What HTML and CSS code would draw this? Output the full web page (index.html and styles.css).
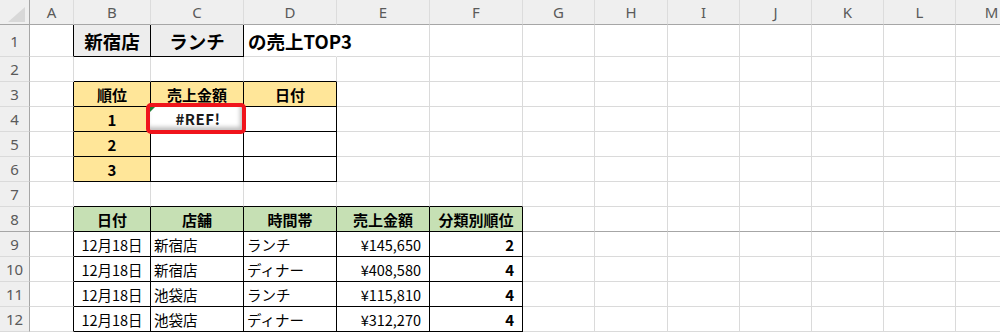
FILE: index.html
```html
<!DOCTYPE html>
<html lang="ja">
<head>
<meta charset="utf-8">
<link rel="stylesheet" href="styles.css">
</head>
<body>
<div class="sheet">
  <!-- header -->
  <div class="corner"></div>
  <div class="hd">A</div><div class="hd">B</div><div class="hd">C</div><div class="hd">D</div><div class="hd">E</div><div class="hd">F</div><div class="hd">G</div><div class="hd">H</div><div class="hd">I</div><div class="hd">J</div><div class="hd">K</div><div class="hd">L</div><div class="hd">M</div>

  <!-- row 1 -->
  <div class="rh">1</div>
  <div class="c br"></div>
  <div class="c gy br bb big ctr">新宿店</div>
  <div class="c gy br bb big ctr">ランチ</div>
  <div class="c big nr">の売上TOP3</div>
  <div class="c"></div><div class="c"></div><div class="c"></div><div class="c"></div><div class="c"></div><div class="c"></div><div class="c"></div><div class="c"></div><div class="c"></div>

  <!-- row 2 -->
  <div class="rh">2</div>
  <div class="c"></div>
  <div class="c bb"></div><div class="c bb"></div><div class="c bb"></div>
  <div class="c"></div><div class="c"></div><div class="c"></div><div class="c"></div><div class="c"></div><div class="c"></div><div class="c"></div><div class="c"></div><div class="c"></div>

  <!-- row 3 -->
  <div class="rh">3</div>
  <div class="c br"></div>
  <div class="c y b ctr br bb">順位</div>
  <div class="c y b ctr br bb">売上金額</div>
  <div class="c y b ctr br bb">日付</div>
  <div class="c"></div><div class="c"></div><div class="c"></div><div class="c"></div><div class="c"></div><div class="c"></div><div class="c"></div><div class="c"></div><div class="c"></div>

  <!-- row 4 -->
  <div class="rh">4</div>
  <div class="c br"></div>
  <div class="c y b ctr br bb">1</div>
  <div class="c br bb ctr err-cell"><span class="err">#REF!<span class="tri"></span></span></div>
  <div class="c br bb"></div>
  <div class="c"></div><div class="c"></div><div class="c"></div><div class="c"></div><div class="c"></div><div class="c"></div><div class="c"></div><div class="c"></div><div class="c"></div>

  <!-- row 5 -->
  <div class="rh">5</div>
  <div class="c br"></div>
  <div class="c y b ctr br bb">2</div>
  <div class="c br bb"></div>
  <div class="c br bb"></div>
  <div class="c"></div><div class="c"></div><div class="c"></div><div class="c"></div><div class="c"></div><div class="c"></div><div class="c"></div><div class="c"></div><div class="c"></div>

  <!-- row 6 -->
  <div class="rh">6</div>
  <div class="c br"></div>
  <div class="c y b ctr br bb">3</div>
  <div class="c br bb"></div>
  <div class="c br bb"></div>
  <div class="c"></div><div class="c"></div><div class="c"></div><div class="c"></div><div class="c"></div><div class="c"></div><div class="c"></div><div class="c"></div><div class="c"></div>

  <!-- row 7 -->
  <div class="rh">7</div>
  <div class="c"></div>
  <div class="c bb"></div><div class="c bb"></div><div class="c bb"></div><div class="c bb"></div><div class="c bb"></div>
  <div class="c"></div><div class="c"></div><div class="c"></div><div class="c"></div><div class="c"></div><div class="c"></div><div class="c"></div>

  <!-- row 8 -->
  <div class="rh fz">8</div>
  <div class="c fz br"></div>
  <div class="c g b ctr br bb">日付</div>
  <div class="c g b ctr br bb">店舗</div>
  <div class="c g b ctr br bb">時間帯</div>
  <div class="c g b ctr br bb">売上金額</div>
  <div class="c g b ctr br bb">分類別順位</div>
  <div class="c fz"></div><div class="c fz"></div><div class="c fz"></div><div class="c fz"></div><div class="c fz"></div><div class="c fz"></div><div class="c fz"></div>

  <!-- row 9 -->
  <div class="rh">9</div>
  <div class="c br"></div>
  <div class="c ctr br bb">12月18日</div>
  <div class="c br bb">新宿店</div>
  <div class="c br bb">ランチ</div>
  <div class="c rt br bb">¥145,650</div>
  <div class="c rt b br bb">2</div>
  <div class="c"></div><div class="c"></div><div class="c"></div><div class="c"></div><div class="c"></div><div class="c"></div><div class="c"></div>

  <!-- row 10 -->
  <div class="rh">10</div>
  <div class="c br"></div>
  <div class="c ctr br bb">12月18日</div>
  <div class="c br bb">新宿店</div>
  <div class="c br bb">ディナー</div>
  <div class="c rt br bb">¥408,580</div>
  <div class="c rt b br bb">4</div>
  <div class="c"></div><div class="c"></div><div class="c"></div><div class="c"></div><div class="c"></div><div class="c"></div><div class="c"></div>

  <!-- row 11 -->
  <div class="rh">11</div>
  <div class="c br"></div>
  <div class="c ctr br bb">12月18日</div>
  <div class="c br bb">池袋店</div>
  <div class="c br bb">ランチ</div>
  <div class="c rt br bb">¥115,810</div>
  <div class="c rt b br bb">4</div>
  <div class="c"></div><div class="c"></div><div class="c"></div><div class="c"></div><div class="c"></div><div class="c"></div><div class="c"></div>

  <!-- row 12 -->
  <div class="rh">12</div>
  <div class="c br"></div>
  <div class="c ctr br bb">12月18日</div>
  <div class="c br bb">池袋店</div>
  <div class="c br bb">ディナー</div>
  <div class="c rt br bb">¥312,270</div>
  <div class="c rt b br bb">4</div>
  <div class="c"></div><div class="c"></div><div class="c"></div><div class="c"></div><div class="c"></div><div class="c"></div><div class="c"></div>
</div>
</body>
</html>
```

FILE: styles.css
```css
html, body {
  margin: 0;
  padding: 0;
  background: #ffffff;
  overflow: hidden;
}

.sheet {
  display: grid;
  grid-template-columns: 30px 44px 77px 93px 93px 93px 93px 72px 73px 72px 72px 72px 72px 72px;
  grid-template-rows: 25px 32px repeat(11, 25px);
  width: 1028px;
  font-family: "Noto Sans CJK JP", "Noto Sans", sans-serif;
  font-size: 14.5px;
  color: #000;
}

.sheet > div {
  box-sizing: border-box;
  border-right: 1px solid #dadada;
  border-bottom: 1px solid #dadada;
  display: flex;
  align-items: center;
  white-space: nowrap;
  min-width: 0;
}

.corner {
  background: #efefef;
  position: relative;
  border-right-color: #a6a6a6 !important;
  border-bottom-color: #a6a6a6 !important;
}
.corner::after {
  content: "";
  position: absolute;
  left: 8px;
  top: 7px;
  width: 17px;
  height: 15px;
  background: #d8d8d8;
  clip-path: polygon(100% 0, 100% 100%, 0 100%);
}

.hd {
  background: #efefef;
  justify-content: center;
  color: #5a5a5a;
  font-family: "Noto Sans", "Open Sans", sans-serif;
  font-size: 15px;
  border-bottom-color: #a6a6a6 !important;
  border-right-color: #dcdcdc !important;
}

.rh {
  background: #efefef;
  justify-content: center;
  color: #5a5a5a;
  font-family: "Noto Sans", "Open Sans", sans-serif;
  font-size: 15px;
  border-right-color: #a6a6a6 !important;
  border-bottom-color: #d6d6d6;
}

.c {
  padding: 0 3px;
}

.ctr { justify-content: center; }
.rt { justify-content: flex-end; padding-right: 8px; }
.b { font-weight: bold; font-size: 15px; }
.big { font-weight: bold; font-size: 18.5px; }

.gy { background: #ededed; }
.y { background: #ffe699; }
.g { background: #c6e0b4; }

.sheet > .br { border-right-color: #000; }
.sheet > .bb { border-bottom-color: #000; }
.sheet > .nr { border-right-color: transparent; padding-left: 4px; }
.sheet > .fz { border-bottom-color: #a6a6a6; }

.err-cell {
  position: relative;
}
.err {
  position: absolute;
  left: -5px;
  top: -4px;
  right: -3px;
  bottom: -3px;
  border: 4px solid #f0141c;
  border-radius: 5px;
  background: #fff;
  box-shadow: inset -2px -3px 4px rgba(0, 0, 0, 0.25);
  display: flex;
  align-items: center;
  justify-content: center;
  padding-left: 4px;
  font-size: 15px;
  font-weight: bold;
  color: #1a1a1a;
  letter-spacing: 0.5px;
}
.tri {
  position: absolute;
  left: 0;
  top: 0;
  width: 5px;
  height: 5px;
  background: #1f7f35;
  clip-path: polygon(0 0, 100% 0, 0 100%);
}
```
